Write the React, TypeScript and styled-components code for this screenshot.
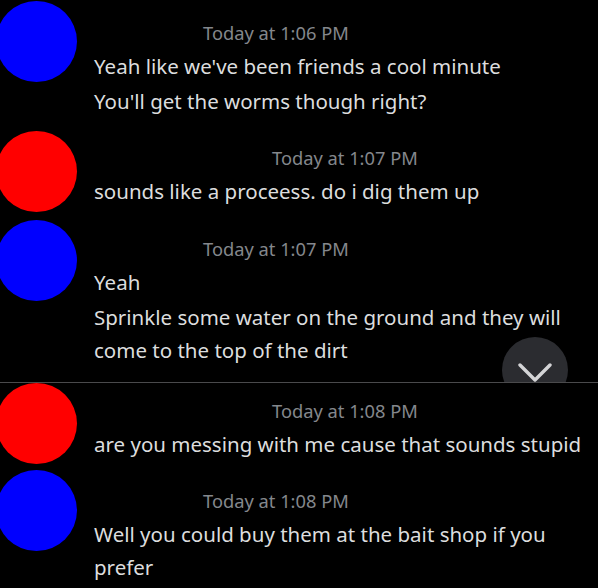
import styled, { createGlobalStyle } from "styled-components";

const GlobalStyle = createGlobalStyle`
  html, body {
    margin: 0;
    padding: 0;
    background: #000;
  }
  body {
    font-family: "Noto Sans", "Open Sans", sans-serif;
    overflow: hidden;
  }
`;

type Group = {
  color: string;
  stamp: string;
  stampIndent: number;
  top: number;
  pad: number;
  lines: string[];
};

const upper: Group[] = [
  {
    color: "#0000ff",
    stamp: "Today at 1:06 PM",
    stampIndent: 109,
    top: 1,
    pad: 15,
    lines: ["Yeah like we've been friends a cool minute", "You'll get the worms though right?"],
  },
  {
    color: "#ff0000",
    stamp: "Today at 1:07 PM",
    stampIndent: 178,
    top: 13,
    pad: 10,
    lines: ["sounds like a proceess. do i dig them up"],
  },
  {
    color: "#0000ff",
    stamp: "Today at 1:07 PM",
    stampIndent: 109,
    top: 8,
    pad: 12,
    lines: ["Yeah", "Sprinkle some water on the ground and they will come to the top of the dirt"],
  },
];

const lower: Group[] = [
  {
    color: "#ff0000",
    stamp: "Today at 1:08 PM",
    stampIndent: 178,
    top: 0,
    pad: 11,
    lines: ["are you messing with me cause that sounds stupid"],
  },
  {
    color: "#0000ff",
    stamp: "Today at 1:08 PM",
    stampIndent: 109,
    top: 6,
    pad: 14,
    lines: ["Well you could buy them at the bait shop if you prefer"],
  },
];

const MessageGroup = ({ group }: { group: Group }) => (
  <Row $top={group.top}>
    <Avatar $color={group.color} />
    <Content $pad={group.pad}>
      <Stamp $indent={group.stampIndent}>{group.stamp}</Stamp>
      {group.lines.map((l, i) => (
        <Line key={i}>{l}</Line>
      ))}
    </Content>
  </Row>
);

export default function App() {
  return (
    <>
      <GlobalStyle />
      <Screen>
        <Pane $height={382}>
          {upper.map((g, i) => (
            <MessageGroup key={i} group={g} />
          ))}
          <JumpButton>
            <svg width="34" height="20" viewBox="0 0 34 20">
              <path d="M2 2 L17 17 L32 2" fill="none" stroke="#d4d4d6" strokeWidth="3.4" strokeLinecap="round" strokeLinejoin="round" />
            </svg>
          </JumpButton>
        </Pane>
        <Divider />
        <Pane>
          {lower.map((g, i) => (
            <MessageGroup key={i} group={g} />
          ))}
        </Pane>
      </Screen>
    </>
  );
}

const Screen = styled.div`
  width: 598px;
  height: 588px;
  background: #000;
  overflow: hidden;
`;

const Pane = styled.section<{ $height?: number }>`
  position: relative;
  overflow: hidden;
  height: ${(p) => (p.$height ? `${p.$height}px` : "auto")};
`;

const Divider = styled.div`
  height: 1px;
  background: #4a4a4c;
`;

const Row = styled.div<{ $top: number }>`
  display: flex;
  align-items: flex-start;
  gap: 17px;
  margin-top: ${(p) => p.$top}px;
`;

const Avatar = styled.div<{ $color: string }>`
  flex: none;
  width: 81px;
  height: 81px;
  margin-left: -4px;
  border-radius: 50%;
  background: ${(p) => p.$color};
`;

const Content = styled.div<{ $pad: number }>`
  flex: 1;
  padding-top: ${(p) => p.$pad}px;
  padding-right: 12px;
`;

const Stamp = styled.div<{ $indent: number }>`
  height: 34px;
  line-height: 34px;
  padding-left: ${(p) => p.$indent}px;
  font-size: 18.3px;
  color: #84878c;
  white-space: nowrap;
`;

const Line = styled.div`
  font-size: 20.5px;
  line-height: 33px;
  color: #dcddde;
  & + & {
    margin-top: 2px;
  }
`;

const JumpButton = styled.div`
  position: absolute;
  left: 502px;
  top: 337px;
  width: 66px;
  height: 66px;
  border-radius: 50%;
  background: #2b2c30;
  display: flex;
  justify-content: center;
  padding-top: 26px;
  box-sizing: border-box;
`;
